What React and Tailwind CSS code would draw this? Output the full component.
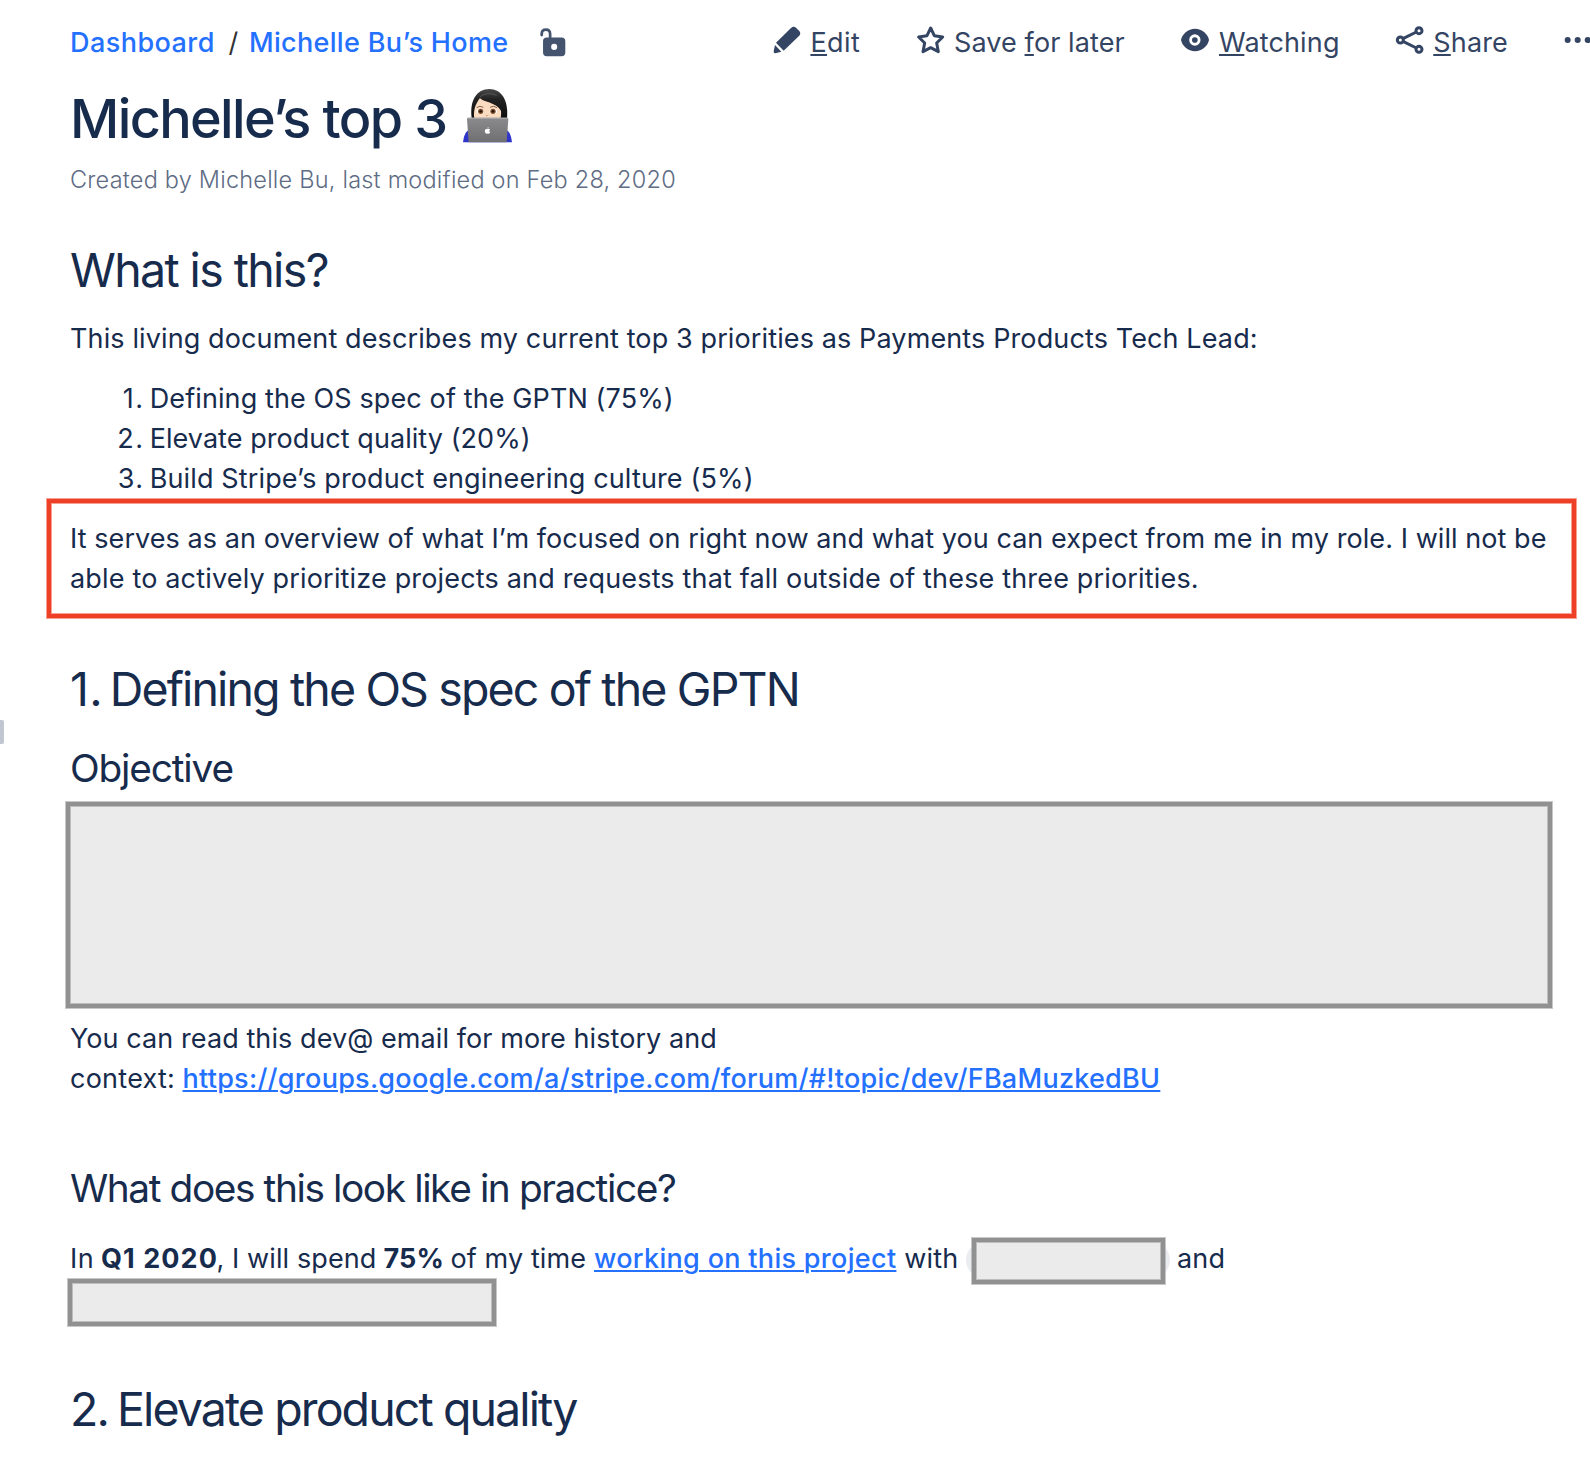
function Seg({ className = "", children }) {
  return <span className={"block shrink-0 whitespace-pre " + className}>{children}</span>;
}

const Key = ({ children }) => (
  <span className="underline decoration-2 underline-offset-2">{children}</span>
);

function UnlockIcon() {
  return (
    <svg className="mt-[28px] h-[29px] w-[28px] shrink-0" viewBox="1420 53 83 86">
      <path d="M1425 74V71Q1425 58 1437.500 58Q1450 58 1450 71V86" fill="none" stroke="#44546f" strokeWidth="8" strokeLinecap="round" />
      <rect x="1429" y="81" width="66" height="56" rx="11" fill="#44546f" />
      <circle cx="1462" cy="109" r="9" fill="#fff" />
    </svg>
  );
}

function PencilIcon() {
  return (
    <svg className="mt-[26px] h-[28px] w-[28px] shrink-0" viewBox="39 48 84 84" fill="#344563">
      <path d="M48 98L93 54Q101 47 108 53L118 63Q124 71 117 78L71 122Z" />
      <path d="M45 105L64 125L46 129.500Q40 130 41 124Z" />
    </svg>
  );
}

function StarIcon() {
  return (
    <svg className="mt-[26px] h-[28px] w-[29px] shrink-0" viewBox="467 48 87 84">
      <path
        d="M511 54L522 77L547 81L529 99L534 125L511 113L488 125L493 99L475 81L500 77Z"
        fill="none"
        stroke="#344563"
        strokeWidth="9"
        strokeLinejoin="round"
      />
    </svg>
  );
}

function EyeIcon() {
  return (
    <svg className="mt-[28px] h-[24px] w-[30px] shrink-0" viewBox="30 54 90 72">
      <path d="M33 90C36 73 54 56.500 75 56.500S114 73 117 90C114 107 96 123.500 75 123.500S36 107 33 90Z" fill="#344563" />
      <circle cx="74.500" cy="90" r="17" fill="#fff" />
      <circle cx="74.500" cy="90" r="8.500" fill="#344563" />
    </svg>
  );
}

function ShareIcon() {
  return (
    <svg className="mt-[25px] h-[30px] w-[30px] shrink-0" viewBox="675 45 90 90" fill="none" stroke="#344563" strokeWidth="9">
      <path d="M699 86L739 66M699 94L739 114" />
      <circle cx="691" cy="90" r="9" />
      <circle cx="747" cy="62" r="9" />
      <circle cx="747" cy="118" r="9" />
    </svg>
  );
}

function MoreIcon() {
  return (
    <svg className="mt-[36px] h-[8px] w-[28px] shrink-0" viewBox="1182 78 84 24" fill="#344563">
      <circle cx="1193" cy="90" r="9" />
      <circle cx="1223" cy="90" r="9" />
      <circle cx="1253" cy="90" r="9" />
    </svg>
  );
}

function TechnologistEmoji() {
  return (
    <svg className="mt-[8px] h-[55px] w-[51px] shrink-0" viewBox="22 24 153 165">
      <defs>
        <linearGradient id="lid" x1="0" y1="0" x2="0" y2="1">
          <stop offset="0" stopColor="#8b8b8d" />
          <stop offset="1" stopColor="#6f6f72" />
        </linearGradient>
        <linearGradient id="hair" x1="0" y1="0" x2="0" y2="1">
          <stop offset="0" stopColor="#4a4a4a" />
          <stop offset="0.350" stopColor="#222" />
          <stop offset="1" stopColor="#0d0d0d" />
        </linearGradient>
      </defs>
      <path d="M25 187Q28 152 46 149H152Q168 152 172 187Z" fill="#2f35c9" />
      <path d="M51 114C44 62 66 27 104 27C140 27 162 60 157 114Z" fill="url(#hair)" />
      <path d="M59 116C55 92 62 72 76 54C84 66 124 66 139 92C140 102 139 110 137 116Z" fill="#fbdcc0" />
      <path d="M76 50Q98 34 126 46" fill="none" stroke="#6a6a6a" strokeWidth="3" opacity="0.600" />
      <path d="M66 83Q76 75 86 82M106 82Q116 75 127 83" fill="none" stroke="#6b4a38" strokeWidth="2.500" />
      <ellipse cx="77" cy="94" rx="11" ry="8" fill="#fff" />
      <ellipse cx="116" cy="94" rx="11" ry="8" fill="#fff" />
      <circle cx="78" cy="94" r="8" fill="#7a4a26" />
      <circle cx="115" cy="94" r="8" fill="#7a4a26" />
      <circle cx="78" cy="94" r="3.500" fill="#1c0f08" />
      <circle cx="115" cy="94" r="3.500" fill="#1c0f08" />
      <path d="M93 106Q97 109 101 106" fill="none" stroke="#d9a17c" strokeWidth="3" />
      <path d="M41 113H157Q161 113 161 117L156 187H42L37 117Q37 113 41 113Z" fill="url(#lid)" />
      <path d="M39 114.500H159" stroke="#b4b4b6" strokeWidth="3" />
      <path d="M98 148C101 146 105 146 106 149C103 151 103 155 107 157C105 161 102 162 98 160.500C94 162 91 159 90.500 154C90.500 148 94 146 98 148Z" fill="#fff" />
      <path d="M98 146Q98 142 102 141Q102 145 98 146Z" fill="#fff" />
    </svg>
  );
}

const REDACTED =
  "border-4 border-[#919191] bg-[#ebebeb] shadow-[0_0_0_1px_rgba(145,145,145,0.5),inset_0_0_0_1px_rgba(145,145,145,0.5)]";

const PRIORITIES = [
  { text: "Defining the OS spec of the GPTN (75%)", spacing: "tracking-[0.11px]" },
  { text: "Elevate product quality (20%)", spacing: "tracking-[0.05px]" },
  { text: "Build Stripe’s product engineering culture (5%)", spacing: "tracking-[0.135px]" },
];

export default function App() {
  return (
    <div className="relative h-[1466px] w-[1590px] overflow-hidden bg-white pl-[70px] font-['Inter',sans-serif] text-[27px] leading-[40px] text-[#172b4d]">
      <span className="absolute left-0 top-[720px] h-[24px] w-[4px] rounded-r-[2px] bg-[#c1c7d0]" />

      <header className="flex h-[80px] items-start text-[#344563]">
        <nav className="flex pt-[23px]">
          <Seg className="w-[158.5px] font-medium tracking-[0.45px] text-[#2470ff]">Dashboard</Seg>
          <Seg className="w-[20.5px] text-[#333]">/</Seg>
          <Seg className="w-[291px] font-medium tracking-[0.32px] text-[#2470ff]">Michelle Bu’s Home</Seg>
        </nav>
        <UnlockIcon />
        <div className="ml-[205px] flex items-start">
          <PencilIcon />
          <Seg className="ml-[9.4px] w-[105.6px] pt-[23px] tracking-[0.4px]"><Key>E</Key>dit</Seg>
          <StarIcon />
          <Seg className="ml-[9px] w-[226px] pt-[23px] tracking-[0.1px]">Save <Key>f</Key>or later</Seg>
          <EyeIcon />
          <Seg className="ml-[9px] w-[176px] pt-[23px] tracking-[0.15px]"><Key>W</Key>atching</Seg>
          <ShareIcon />
          <Seg className="ml-[8.3px] w-[130.7px] pt-[23px] tracking-[0.15px]"><Key>S</Key>hare</Seg>
          <MoreIcon />
        </div>
      </header>

      <h1 className="flex h-[80px] text-[54px] leading-[80px] font-medium">
        <Seg className="-mt-px w-[392px] tracking-[-1.63px]">Michelle’s top 3</Seg>
        <TechnologistEmoji />
      </h1>
      <p className="whitespace-nowrap text-[23.5px] font-light tracking-[0.215px] text-[#5e6c84]">
        Created by Michelle Bu, last modified on Feb 28, 2020
      </p>

      <h2 className="mt-[30px] whitespace-nowrap text-[46.5px] leading-[80px] tracking-[-1.62px]">What is this?</h2>
      <p className="mt-[9px] whitespace-nowrap tracking-[0.12px]">
        This living document describes my current top 3 priorities as Payments Products Tech Lead:
      </p>
      <ol className="mt-[20px]">
        {PRIORITIES.map((item, i) => (
          <li key={item.text} className="flex whitespace-nowrap">
            <span className="w-[74.500px] text-right tracking-[1.5px]">{i + 1}.</span>
            <span className={"ml-[5.2px] " + item.spacing}>{item.text}</span>
          </li>
        ))}
      </ol>

      <div className="-ml-[23px] h-[119px] w-[1529px] whitespace-nowrap border-4 border-[#ee4026] pl-[19px] pt-[16px] shadow-[0_0_0_1px_rgba(238,64,38,0.5),inset_0_0_0_1px_rgba(238,64,38,0.5)]">
        <p className="tracking-[0.067px]">
          It serves as an overview of what I’m focused on right now and what you can expect from me in my role. I will not be
        </p>
        <p className="tracking-[0.17px]">
          able to actively prioritize projects and requests that fall outside of these three priorities.
        </p>
      </div>

      <h2 className="mt-[31px] whitespace-nowrap text-[46.5px] leading-[80px] tracking-[-1.86px]">
        <span className="tracking-[0.2px]">1</span>.<span className="tracking-[-4px]"> </span>Defining the OS spec of the GPTN
      </h2>
      <h3 className="mt-[9px] text-[38.8px] leading-[60px] tracking-[-1.17px]">Objective</h3>
      <div className={"-ml-[4px] mt-[4px] h-[206px] w-[1486px] " + REDACTED} />

      <p className="mt-[11px] whitespace-nowrap tracking-[0.08px]">You can read this dev@ email for more history and</p>
      <div className="flex">
        <Seg className="w-[112.5px] tracking-[0.25px]">context:</Seg>
        <a className="whitespace-nowrap font-medium tracking-[0.265px] text-[#2470ff] underline decoration-2 underline-offset-2">
          https://groups.google.com/a/stripe.com/forum/#!topic/dev/FBaMuzkedBU
        </a>
      </div>

      <h3 className="mt-[59px] whitespace-nowrap text-[38.8px] leading-[60px] tracking-[-1.4px]">What does this look like in practice?</h3>
      <div className="mt-[21px] flex h-[40px]">
        <Seg className="w-[31px] tracking-[0.4px]">In</Seg>
        <Seg className="w-[115.5px] font-bold tracking-[1.08px]">Q1 2020</Seg>
        <Seg className="w-[167px] tracking-[0.1px]">, I will spend</Seg>
        <Seg className="w-[59.3px] font-bold tracking-[0.1px]">75%</Seg>
        <Seg className="w-[151.2px] tracking-[0.1px]"> of my time</Seg>
        <a className="w-[302.400px] shrink-0 whitespace-nowrap font-medium tracking-[0.31px] text-[#2470ff] underline decoration-2 underline-offset-2">working on this project</a>
        <Seg className="w-[69.600px] tracking-[0.2px]"> with</Seg>
        <span className="mt-[3px] flex h-[36px] w-[204px] shrink-0 items-start rounded-[18px] bg-[#ebecf0]">
          <span className={"-mt-[4px] ml-[6px] h-[46px] w-[193px] shrink-0 " + REDACTED} />
        </span>
        <Seg className="ml-[7px] tracking-[0.2px]">and</Seg>
      </div>
      <div className={"-ml-[2px] h-[47px] w-[428px] " + REDACTED} />

      <h2 className="mt-[43px] whitespace-nowrap text-[46.5px] leading-[80px] tracking-[-1.9px]">
        2.<span className="tracking-[-4px]"> </span>Elevate product quality
      </h2>
    </div>
  );
}
